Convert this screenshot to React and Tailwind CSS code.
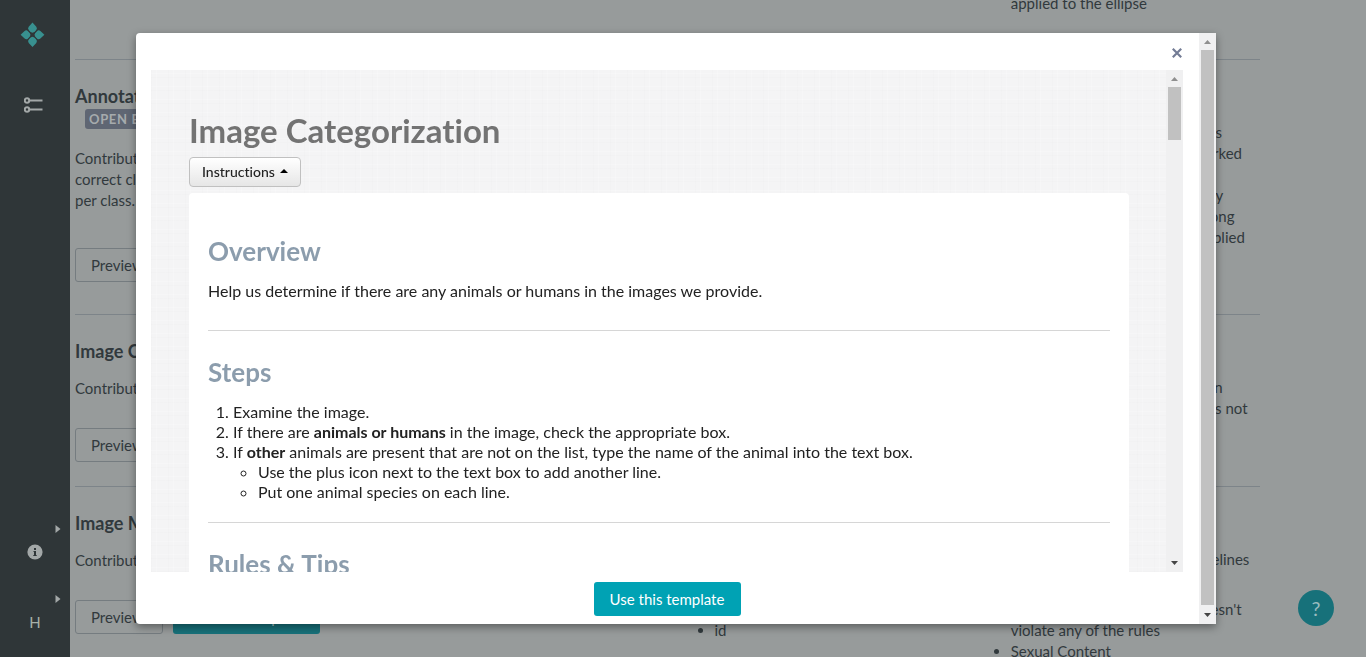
const rows = [
  {
    key: 'ellipse',
    height: 'h-[66px]',
    last: ['applied to the ellipse'],
    lastPad: 'pb-[45px] pt-0',
  },
  {
    key: 'annotation',
    height: 'h-[255px]',
    title: 'Annotation of Images',
    badge: 'OPEN BETA',
    text: ['Contributors draw boxes and the', 'correct class, with several boxes', 'per class.'],
    textGap: 'mt-[19px]',
    buttonGap: 'mt-[37px]',
    last: [
      'Labels',
      'Quality',
      'Image annotations for all classes',
      'Minimum number of tiles is marked',
      'Ontology',
      'Every class is set in the ontology',
      'Agreement is lower when a wrong',
      'class and a wrong shape are applied',
    ],
  },
  {
    key: 'categorization',
    height: 'h-[172px]',
    title: 'Image Categorization',
    text: ['Contributors categorize an image.'],
    textGap: 'mt-[15px]',
    buttonGap: 'mt-[29px]',
    last: ['Categories', 'Images', 'An animal or a human present in', 'Other species when an animal is not', 'listed'],
  },
  {
    key: 'moderation',
    height: 'h-[172px]',
    title: 'Image Moderation',
    text: ['Contributors moderate an image.'],
    textGap: 'mt-[15px]',
    buttonGap: 'mt-[29px]',
    data: ['image_url', 'title', 'caption', 'source', 'id'],
  },
];

function ArrowUp({ className }) {
  return (
    <svg className={className} width="7" height="4" viewBox="0 0 7 4" fill="currentColor" aria-hidden="true">
      <path d="M3.5 0L7 4H0z" />
    </svg>
  );
}

function ArrowDown({ className }) {
  return (
    <svg className={className} width="7" height="4" viewBox="0 0 7 4" fill="currentColor" aria-hidden="true">
      <path d="M0 0h7L3.500 4z" />
    </svg>
  );
}

function ScrollTrack({ thumb }) {
  return (
    <div className="flex w-[17px] shrink-0 flex-col items-center bg-[#f0f0f1]" aria-hidden="true">
      <div className="flex h-[17px] items-center justify-center">
        <ArrowUp className="text-[#8f8f8f]" />
      </div>
      <div className="flex w-[13px] flex-1 flex-col">
        <div className={`w-full bg-[#c1c1c1] ${thumb}`} />
      </div>
      <div className="flex h-[19px] items-center justify-center">
        <ArrowDown className="text-[#454545]" />
      </div>
    </div>
  );
}

function Sidebar() {
  return (
    <nav className="flex w-[70px] shrink-0 flex-col bg-[#2f3638] text-[#a3a8a8]">
      <a href="#home" aria-label="Home" className="ml-[20px] mt-[22px] block w-[26px]">
        <svg width="26" height="26" viewBox="0 0 26 26" fill="#38908f">
          <path d="M12.500 0.500L16.300 4.700Q17.700 6.500 16.100 8.300Q14.600 10.500 12.500 10.800Q10.400 10.500 8.900 8.300Q7.300 6.500 8.700 4.700z" />
          <path transform="rotate(90 12.500 12.800)" d="M12.500 0.900L16.300 4.900Q17.700 6.700 16.100 8.400Q14.600 10.500 12.500 10.800Q10.400 10.500 8.900 8.400Q7.300 6.700 8.700 4.900z" />
          <path transform="rotate(180 12.500 12.800)" d="M12.500 0.500L16.300 4.700Q17.700 6.500 16.100 8.300Q14.600 10.500 12.500 10.800Q10.400 10.500 8.900 8.300Q7.300 6.500 8.700 4.700z" />
          <path transform="rotate(270 12.500 12.800)" d="M12.500 0.900L16.300 4.900Q17.700 6.700 16.100 8.400Q14.600 10.500 12.500 10.800Q10.400 10.500 8.900 8.400Q7.300 6.700 8.700 4.900z" />
          <path d="M7.700 8L17.300 17.600M17.300 8L7.700 17.600" stroke="#2f3638" strokeWidth="0.700" />
        </svg>
      </a>
      <a href="#jobs" aria-label="Jobs" className="ml-[24px] mt-[48px] block w-[20px]">
        <svg width="20" height="18" viewBox="0 0 20 18" fill="none" stroke="currentColor" strokeWidth="2">
          <circle cx="3" cy="4.500" r="2.200" />
          <circle cx="3" cy="13.500" r="2.200" />
          <path d="M6 4.500h12.500M6 13.500h12.500" />
        </svg>
      </a>
      <div className="flex-1" />
      <div className="mb-[25px] flex flex-col">
        <svg className="mr-[9px] self-end" width="6" height="8" viewBox="0 0 6 8" fill="currentColor" aria-hidden="true">
          <path d="M0.500 0L5.500 4L0.500 8z" />
        </svg>
        <button type="button" aria-label="Information" className="mt-[11px] self-center">
          <svg width="16" height="16" viewBox="0 0 16 16">
            <circle cx="8" cy="8" r="7.600" fill="currentColor" />
            <path d="M7 4h2v2H7zM6.500 7H9v4h.700v1H6.300v-1H7V8h-.500z" fill="#2f3638" />
          </svg>
        </button>
        <svg className="mr-[9px] mt-[35px] self-end" width="6" height="8" viewBox="0 0 6 8" fill="currentColor" aria-hidden="true">
          <path d="M0.500 0L5.500 4L0.500 8z" />
        </svg>
        <button type="button" className="mt-[9px] self-center text-[15px] leading-[20px] text-[#a7b1a8]">H</button>
      </div>
    </nav>
  );
}

function TemplateRow({ row }) {
  return (
    <tr className={`align-top ${row.height} ${row.title ? 'border-t border-[#7d8489]' : ''}`}>
      <td className="p-0">
        {row.title && (
          <div className="flex flex-col items-start whitespace-nowrap pt-[24px]">
            <h3 className="text-[18px] font-bold leading-[24px]">{row.title}</h3>
            {row.badge && (
              <span className="ml-[10px] mt-[1px] rounded-[3px] bg-[#5f6673] px-[4px] text-[13px] font-bold leading-[20px] tracking-wider text-[#a6abad]">
                {row.badge}
              </span>
            )}
            <p className={row.textGap}>
              {row.text.map((line) => (
                <span key={line} className="block">{line}</span>
              ))}
            </p>
            <div className={`flex gap-[10px] ${row.buttonGap}`}>
              <button type="button" className="h-[34px] w-[88px] rounded-[3px] border border-[#757c80] px-[15px] text-left text-[15px]">Preview</button>
              <button type="button" className="h-[34px] w-[147px] rounded-[3px] bg-[#17717a] text-[15px] text-[#a9c5c8]">Use this template</button>
            </div>
          </div>
        )}
      </td>
      <td className="p-0" />
      <td className="p-0">
        {row.data && (
          <div className="pt-[20px]">
            <p className="mb-[8px] pl-[7px]">Data</p>
            <ul className="list-disc pl-[47px]">
              {row.data.map((item) => (
                <li key={item}>{item}</li>
              ))}
            </ul>
          </div>
        )}
      </td>
      <td className="p-0">
        {row.last && (
          <p className={`whitespace-nowrap pl-[47px] ${row.lastPad || 'pt-[20px]'}`}>
            {row.last.map((line) => (
              <span key={line} className="block">{line}</span>
            ))}
          </p>
        )}
        {row.data && (
          <div className="whitespace-nowrap pl-[47px] pt-[20px]">
            <p>Moderation</p>
            <p>Images</p>
            <p>Check every image by the guidelines</p>
            <p className="mb-[8px]">given</p>
            <p>None: the image is fine and doesn't</p>
            <p>violate any of the rules</p>
            <ul className="list-disc">
              <li>Sexual Content</li>
            </ul>
          </div>
        )}
      </td>
    </tr>
  );
}

function PreviewDialog() {
  return (
    <div className="fixed inset-0 flex py-[33px] pl-[136px] pr-[150px]">
      <div
        role="dialog"
        aria-label="Template preview"
        className="flex min-w-0 flex-1 overflow-hidden rounded-l-[4px] bg-white shadow-[0_3px_9px_rgba(0,0,0,0.4)]"
      >
        <div className="flex min-w-0 flex-1 flex-col pb-[8px] pl-[15px] pr-[16px]">
          <div className="flex h-[37px] shrink-0 items-center justify-end pt-[3px]">
            <button type="button" aria-label="Close" className="p-[1px]">
              <svg width="10" height="10" viewBox="0 0 10 10" fill="none" stroke="#737c95" strokeWidth="2.200">
                <path d="M0.800 0.800L9.200 9.200M9.200 0.800L0.800 9.200" />
              </svg>
            </button>
          </div>

          <div className="flex min-h-0 flex-1 bg-[#f4f4f5]">
            <div className="min-w-0 flex-1 overflow-hidden bg-[repeating-linear-gradient(90deg,rgba(0,0,0,0.006)_0_1px,transparent_1px_5px,rgba(255,255,255,0.2)_5px_6px,transparent_6px_17px),repeating-linear-gradient(0deg,rgba(0,0,0,0.006)_0_1px,transparent_1px_4px,rgba(255,255,255,0.2)_4px_5px,transparent_5px_13px)] pl-[38px] pr-[37px] pt-[40px]">
              <h1 className="text-[33px] font-bold leading-[40px] text-[#737373]">Image Categorization</h1>
              <button
                type="button"
                className="mt-[7px] flex h-[30px] items-center gap-[5px] rounded-[4px] border border-[#c0c0c0] bg-linear-to-b from-white to-[#e6e6e6] px-[12px] pb-[2px] text-[14px] font-medium text-[#222]"
              >
                Instructions
                <svg width="8" height="4" viewBox="0 0 8 4" fill="#000" aria-hidden="true">
                  <path d="M4 0L8 4H0z" />
                </svg>
              </button>
              <div className="mt-[6px] rounded-t-[4px] bg-white px-[19px] pb-[20px] pt-[38px] text-[16px] leading-[20px] text-[#222]">
                <h2 className="text-[26px] font-bold leading-[40px] text-[#8c9dad]">Overview</h2>
                <p className="mt-[10px]">Help us determine if there are any animals or humans in the images we provide.</p>
                <hr className="mb-[21px] mt-[29px] border-[#d6d6d6]" />
                <h2 className="text-[26px] font-bold leading-[40px] text-[#8c9dad]">Steps</h2>
                <ol className="mt-[10px] list-decimal pl-[25px]">
                  <li>Examine the image.</li>
                  <li>If there are <b>animals or humans</b> in the image, check the appropriate box.</li>
                  <li>
                    If <b>other</b> animals are present that are not on the list, type the name of the animal into the text box.
                    <ul className="list-[circle] pl-[25px]">
                      <li>Use the plus icon next to the text box to add another line.</li>
                      <li>Put one animal species on each line.</li>
                    </ul>
                  </li>
                </ol>
                <hr className="mb-[21px] mt-[20px] border-[#d6d6d6]" />
                <h2 className="text-[26px] font-bold leading-[40px] text-[#8c9dad]">Rules &amp; Tips</h2>
              </div>
            </div>
            <ScrollTrack thumb="h-[53px]" />
          </div>

          <button type="button" className="mt-[10px] h-[34px] w-[147px] shrink-0 self-center rounded-[3px] bg-[#00a2b4] text-[15px] text-white">
            Use this template
          </button>
        </div>
        <ScrollTrack thumb="h-full" />
      </div>
    </div>
  );
}

export default function App() {
  return (
    <div className="flex h-screen overflow-hidden bg-[#979b9b] font-['Lato',sans-serif] text-[15px] leading-[21px] text-[#31393d] [font-variant-ligatures:none]">
      <Sidebar />
      <main className="min-w-0 flex-1 overflow-hidden pl-[5px] pr-[106px]">
        <table className="-mt-[7px] w-full table-fixed border-collapse">
          <tbody>
            {rows.map((row) => (
              <TemplateRow key={row.key} row={row} />
            ))}
          </tbody>
        </table>
      </main>
      <button
        type="button"
        aria-label="Help"
        className="fixed bottom-[31px] right-[32px] size-[36px] rounded-full bg-[#17717a] text-[20px] text-[#9bbcbf]"
      >
        ?
      </button>
      <PreviewDialog />
    </div>
  );
}
